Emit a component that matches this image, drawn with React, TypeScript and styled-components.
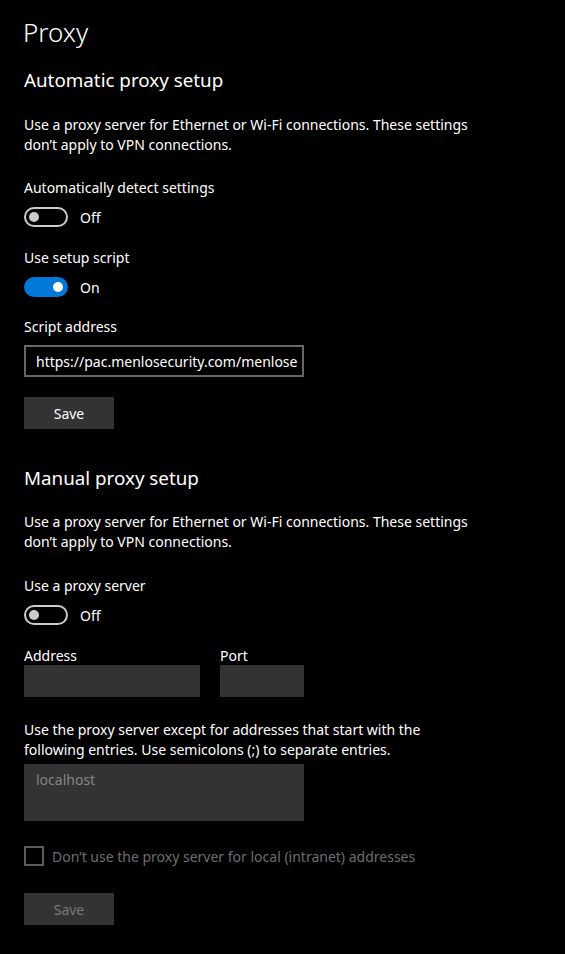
import React from "react";
import styled, { createGlobalStyle } from "styled-components";

const Global = createGlobalStyle`
  html, body { margin: 0; padding: 0; background: #000; }
  body { font-family: "Segoe UI", "Noto Sans", "Open Sans", sans-serif; color: #fff; }
  * { box-sizing: border-box; }
`;

const Page = styled.div`
  width: 565px;
  min-height: 954px;
  background: #000;
  padding: 12px 0 0 24px;
  display: flex;
  flex-direction: column;
`;

const Title = styled.h1`
  margin: 0 0 0 -1px;
  font-size: 26px;
  font-weight: 300;
  line-height: 40px;
`;

const Heading = styled.h2<{ $mt: number }>`
  margin: ${(p) => p.$mt}px 0 0 0;
  padding-top: 1px;
  margin-bottom: -1px;
  font-size: 18.8px;
  font-weight: 400;
  line-height: 28px;
`;

const Text = styled.p<{ $mt: number }>`
  margin: ${(p) => p.$mt}px 0 -1px 0;
  padding-top: 1px;
  font-size: 14px;
  line-height: 20px;
  color: #fff;
  max-width: 450px;
`;

const ToggleRow = styled.div<{ $mt: number }>`
  margin-top: ${(p) => p.$mt}px;
  display: flex;
  align-items: center;
  gap: 12px;
  height: 20px;
  font-size: 14px;
`;

const Track = styled.div<{ $on: boolean }>`
  width: 44px;
  height: 20px;
  border-radius: 10px;
  border: 2px solid ${(p) => (p.$on ? "#0078d7" : "#cccccc")};
  background: ${(p) => (p.$on ? "#0078d7" : "transparent")};
  display: flex;
  align-items: center;
  justify-content: ${(p) => (p.$on ? "flex-end" : "flex-start")};
  padding: 0 3px;
`;

const Knob = styled.div<{ $on: boolean }>`
  width: 10px;
  height: 10px;
  border-radius: 50%;
  background: ${(p) => (p.$on ? "#ffffff" : "#cccccc")};
`;

const TextInput = styled.div<{ $mt: number }>`
  margin-top: ${(p) => p.$mt}px;
  width: 280px;
  height: 32px;
  border: 2px solid #666;
  padding: 0 10px;
  display: flex;
  align-items: center;
  font-size: 14px;
  white-space: nowrap;
  overflow: hidden;
`;

const Button = styled.button<{ $mt: number; $disabled?: boolean }>`
  margin-top: ${(p) => p.$mt}px;
  width: 90px;
  height: 32px;
  border: none;
  background: #333;
  color: ${(p) => (p.$disabled ? "#7a7a7a" : "#fff")};
  font-family: inherit;
  font-size: 14px;
  padding: 0;
`;

const FieldRow = styled.div<{ $mt: number }>`
  margin-top: ${(p) => p.$mt}px;
  display: flex;
  gap: 20px;
`;

const Field = styled.div`
  display: flex;
  flex-direction: column;
  font-size: 14px;
  line-height: 20px;
`;

const FieldLabel = styled.span`
  padding-top: 1px;
  margin-bottom: -1px;
`;

const Box = styled.div<{ $w: number; $h: number; $mt?: number }>`
  margin-top: ${(p) => p.$mt ?? 0}px;
  width: ${(p) => p.$w}px;
  height: ${(p) => p.$h}px;
  background: #333;
  color: #858585;
  font-size: 14px;
  line-height: 20px;
  padding: 6px 12px;
`;

const CheckRow = styled.label<{ $mt: number }>`
  margin-top: ${(p) => p.$mt}px;
  display: flex;
  align-items: center;
  gap: 8px;
  font-size: 14px;
  color: #6e6e6e;
`;

const CheckBox = styled.span`
  width: 20px;
  height: 20px;
  border: 2px solid #5a5a5a;
`;

const Toggle = ({ on, mt }: { on: boolean; mt: number }) => (
  <ToggleRow $mt={mt}>
    <Track $on={on}>
      <Knob $on={on} />
    </Track>
    <span>{on ? "On" : "Off"}</span>
  </ToggleRow>
);

export default function App() {
  return (
    <>
      <Global />
      <Page>
        <Title>Proxy</Title>
        <Heading $mt={13}>Automatic proxy setup</Heading>
        <Text $mt={21}>
          Use a proxy server for Ethernet or Wi-Fi connections. These settings
          don’t apply to VPN connections.
        </Text>
        <Text $mt={23}>Automatically detect settings</Text>
        <Toggle on={false} mt={10} />
        <Text $mt={20}>Use setup script</Text>
        <Toggle on={true} mt={10} />
        <Text $mt={19}>Script address</Text>
        <TextInput $mt={9}>https://pac.menlosecurity.com/menlose</TextInput>
        <Button $mt={20}>Save</Button>
        <Heading $mt={34}>Manual proxy setup</Heading>
        <Text $mt={20}>
          Use a proxy server for Ethernet or Wi-Fi connections. These settings
          don’t apply to VPN connections.
        </Text>
        <Text $mt={24}>Use a proxy server</Text>
        <Toggle on={false} mt={10} />
        <FieldRow $mt={20}>
          <Field>
            <FieldLabel>Address</FieldLabel>
            <Box $w={176} $h={32} />
          </Field>
          <Field>
            <FieldLabel>Port</FieldLabel>
            <Box $w={84} $h={32} />
          </Field>
        </FieldRow>
        <Text $mt={22}>
          Use the proxy server except for addresses that start with the
          following entries. Use semicolons (;) to separate entries.
        </Text>
        <Box $w={280} $h={57} $mt={5}>localhost</Box>
        <CheckRow $mt={25}>
          <CheckBox />
          Don’t use the proxy server for local (intranet) addresses
        </CheckRow>
        <Button $mt={27} $disabled>
          Save
        </Button>
      </Page>
    </>
  );
}
